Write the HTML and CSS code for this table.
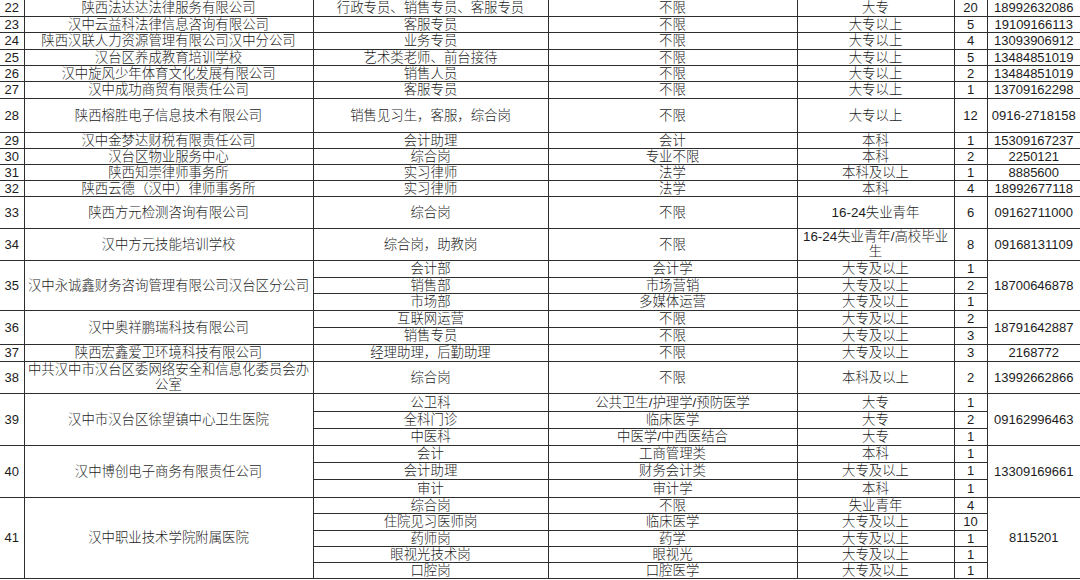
FILE: index.html
```html
<!DOCTYPE html>
<html lang="zh-CN">
<head>
<meta charset="utf-8">
<title>招聘岗位表</title>
<link rel="stylesheet" href="styles.css">
</head>
<body>
<table class="jobs">
<colgroup>
<col class="c-no"><col class="c-co"><col class="c-pos"><col class="c-maj"><col class="c-edu"><col class="c-cnt"><col class="c-ph">
</colgroup>
<tbody>
<tr class="r16 first"><td class="n no">22</td><td>陕西法达达法律服务有限公司</td><td>行政专员、销售专员、客服专员</td><td>不限</td><td>大专</td><td class="n">20</td><td class="n ph">18992632086</td></tr>
<tr class="r16"><td class="n no">23</td><td>汉中云益科法律信息咨询有限公司</td><td>客服专员</td><td>不限</td><td>大专以上</td><td class="n">5</td><td class="n ph">19109166113</td></tr>
<tr class="r17"><td class="n no">24</td><td>陕西汉联人力资源管理有限公司汉中分公司</td><td>业务专员</td><td>不限</td><td>大专以上</td><td class="n">4</td><td class="n ph">13093906912</td></tr>
<tr class="r16"><td class="n no">25</td><td>汉台区养成教育培训学校</td><td>艺术类老师、前台接待</td><td>不限</td><td>大专以上</td><td class="n">5</td><td class="n ph">13484851019</td></tr>
<tr class="r16"><td class="n no">26</td><td>汉中旋风少年体育文化发展有限公司</td><td>销售人员</td><td>不限</td><td>大专以上</td><td class="n">2</td><td class="n ph">13484851019</td></tr>
<tr class="r17"><td class="n no">27</td><td>汉中成功商贸有限责任公司</td><td>客服专员</td><td>不限</td><td>大专以上</td><td class="n">1</td><td class="n ph">13709162298</td></tr>
<tr class="r34"><td class="n no">28</td><td>陕西榕胜电子信息技术有限公司</td><td>销售见习生，客服，综合岗</td><td>不限</td><td>大专以上</td><td class="n">12</td><td class="n ph">0916-2718158</td></tr>
<tr class="r16"><td class="n no">29</td><td>汉中金梦达财税有限责任公司</td><td>会计助理</td><td>会计</td><td>本科</td><td class="n">1</td><td class="n ph">15309167237</td></tr>
<tr class="r16"><td class="n no">30</td><td>汉台区物业服务中心</td><td>综合岗</td><td>专业不限</td><td>本科</td><td class="n">2</td><td class="n ph">2250121</td></tr>
<tr class="r16"><td class="n no">31</td><td>陕西知崇律师事务所</td><td>实习律师</td><td>法学</td><td>本科及以上</td><td class="n">1</td><td class="n ph">8885600</td></tr>
<tr class="r16"><td class="n no">32</td><td>陕西云德（汉中）律师事务所</td><td>实习律师</td><td>法学</td><td>本科</td><td class="n">4</td><td class="n ph">18992677118</td></tr>
<tr class="r32"><td class="n no">33</td><td>陕西方元检测咨询有限公司</td><td>综合岗</td><td>不限</td><td>16-24失业青年</td><td class="n">6</td><td class="n ph">09162711000</td></tr>
<tr class="r32"><td class="n no">34</td><td>汉中方元技能培训学校</td><td>综合岗，助教岗</td><td>不限</td><td>16-24失业青年/高校毕业生</td><td class="n">8</td><td class="n ph">09168131109</td></tr>
<tr class="r17"><td class="n no" rowspan="3">35</td><td rowspan="3">汉中永诚鑫财务咨询管理有限公司汉台区分公司</td><td>会计部</td><td>会计学</td><td>大专及以上</td><td class="n">1</td><td class="n ph" rowspan="3">18700646878</td></tr>
<tr class="r16"><td>销售部</td><td>市场营销</td><td>大专及以上</td><td class="n">2</td></tr>
<tr class="r17"><td>市场部</td><td>多媒体运营</td><td>大专及以上</td><td class="n">1</td></tr>
<tr class="r17"><td class="n no" rowspan="2">36</td><td rowspan="2">汉中奥祥鹏瑞科技有限公司</td><td>互联网运营</td><td>不限</td><td>大专及以上</td><td class="n">2</td><td class="n ph" rowspan="2">18791642887</td></tr>
<tr class="r17"><td>销售专员</td><td>不限</td><td>大专及以上</td><td class="n">3</td></tr>
<tr class="r17"><td class="n no">37</td><td>陕西宏鑫爱卫环境科技有限公司</td><td>经理助理，后勤助理</td><td>不限</td><td>大专及以上</td><td class="n">3</td><td class="n ph">2168772</td></tr>
<tr class="r32"><td class="n no">38</td><td>中共汉中市汉台区委网络安全和信息化委员会办公室</td><td>综合岗</td><td>不限</td><td>本科及以上</td><td class="n">2</td><td class="n ph">13992662866</td></tr>
<tr class="r18"><td class="n no" rowspan="3">39</td><td rowspan="3">汉中市汉台区徐望镇中心卫生医院</td><td>公卫科</td><td>公共卫生/护理学/预防医学</td><td>大专</td><td class="n">1</td><td class="n ph" rowspan="3">09162996463</td></tr>
<tr class="r17"><td>全科门诊</td><td>临床医学</td><td>大专</td><td class="n">2</td></tr>
<tr class="r17"><td>中医科</td><td>中医学/中西医结合</td><td>大专</td><td class="n">1</td></tr>
<tr class="r17"><td class="n no" rowspan="3">40</td><td rowspan="3">汉中博创电子商务有限责任公司</td><td>会计</td><td>工商管理类</td><td>本科</td><td class="n">1</td><td class="n ph" rowspan="3">13309169661</td></tr>
<tr class="r17"><td>会计助理</td><td>财务会计类</td><td>大专及以上</td><td class="n">1</td></tr>
<tr class="r18"><td>审计</td><td>审计学</td><td>本科</td><td class="n">1</td></tr>
<tr class="r16"><td class="n no" rowspan="5">41</td><td rowspan="5">汉中职业技术学院附属医院</td><td>综合岗</td><td>不限</td><td>失业青年</td><td class="n">4</td><td class="n ph" rowspan="5">8115201</td></tr>
<tr class="r17"><td>住院见习医师岗</td><td>临床医学</td><td>大专及以上</td><td class="n">10</td></tr>
<tr class="r16"><td>药师岗</td><td>药学</td><td>大专及以上</td><td class="n">1</td></tr>
<tr class="r16"><td>眼视光技术岗</td><td>眼视光</td><td>大专及以上</td><td class="n">1</td></tr>
<tr class="r16"><td>口腔岗</td><td>口腔医学</td><td>大专及以上</td><td class="n">1</td></tr>
</tbody>
</table>
</body>
</html>
```
FILE: styles.css
```css
html, body {
  margin: 0;
  padding: 0;
  background: #ffffff;
  overflow: hidden;
}

.jobs {
  border-collapse: collapse;
  table-layout: fixed;
  width: 1080px;
  font-family: "Liberation Sans", "Noto Sans CJK SC", sans-serif;
  font-size: 13.4px;
  font-weight: 300;
  color: #1c1c1c;
}

.c-no { width: 24px; }
.c-co { width: 289px; }
.c-pos { width: 235px; }
.c-maj { width: 249px; }
.c-edu { width: 157px; }
.c-cnt { width: 33px; }
.c-ph { width: 93px; }

.jobs td {
  border: 1px solid #2e2e2e;
  padding: 0;
  line-height: 15px;
  text-align: center;
  vertical-align: middle;
  white-space: normal;
  overflow: hidden;
}

.jobs td.no { border-left: none; }
.jobs td.ph { border-right: none; }
.jobs tr.first td { border-top: none; }

.jobs td.n {
  font-size: 13px;
  font-weight: 400;
}

.r16 { height: 16px; }
.r17 { height: 17px; }
.r18 { height: 18px; }
.r32 { height: 32px; }
.r34 { height: 34px; }
```
